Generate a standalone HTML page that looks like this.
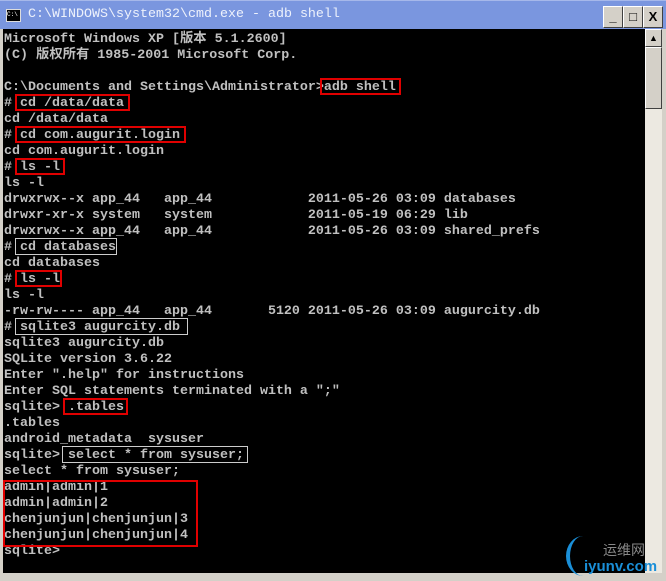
<!DOCTYPE html><html><head><meta charset="utf-8"><style>
body{margin:0;width:666px;height:581px;background:#d4d0c8;position:relative;overflow:hidden;font-family:"Liberation Mono","Noto Sans CJK SC",monospace}
#title{position:absolute;left:0;top:0;width:666px;height:28px;background:#7a96df;border-top:1px solid #a6b8ea}
#title .t{position:absolute;left:28px;top:6px;color:#eef2fc;font-size:13.33px;white-space:pre}
#ico{position:absolute;left:6px;top:8px;width:13px;height:11px;background:#000;border:1px solid #ddd;color:#fff;font-size:6px;line-height:10px}
.btn{position:absolute;top:5px;width:18px;height:20px;background:#d4d0c8;border:1px solid;border-color:#fff #404040 #404040 #fff;font:bold 13px "Liberation Sans",sans-serif;text-align:center;line-height:20px;color:#000}
#con{position:absolute;left:3px;top:29px;width:642px;height:544px;background:#000}
#txt{position:absolute;left:4px;top:32px;color:#c0c0c0;font-size:13.33px;font-weight:bold;line-height:16px;white-space:pre}
#sb{position:absolute;left:645px;top:29px;width:17px;height:544px;background:#ece9e1}
.box{position:absolute;border:2px solid #e00000;box-sizing:border-box}
</style></head><body>
<div id="title"><div id="ico">C:\</div><div class="t">C:\WINDOWS\system32\cmd.exe - adb shell</div>
<div class="btn" style="left:603px">_</div><div class="btn" style="left:623px">□</div><div class="btn" style="left:643px">X</div></div>
<div id="con"></div>
<div id="sb"><div class="btn" style="left:0;top:0;width:15px;height:16px;line-height:16px;font-size:9px">▲</div><div style="position:absolute;left:0;top:18px;width:15px;height:60px;background:#d4d0c8;border:1px solid;border-color:#fff #404040 #404040 #fff"></div></div>
<div id="txt">Microsoft Windows XP [版本 5.1.2600]
(C) 版权所有 1985-2001 Microsoft Corp.

C:\Documents and Settings\Administrator>adb shell
# cd /data/data
cd /data/data
# cd com.augurit.login
cd com.augurit.login
# ls -l
ls -l
drwxrwx--x app_44   app_44            2011-05-26 03:09 databases
drwxr-xr-x system   system            2011-05-19 06:29 lib
drwxrwx--x app_44   app_44            2011-05-26 03:09 shared_prefs
# cd databases
cd databases
# ls -l
ls -l
-rw-rw---- app_44   app_44       5120 2011-05-26 03:09 augurcity.db
# sqlite3 augurcity.db
sqlite3 augurcity.db
SQLite version 3.6.22
Enter ".help" for instructions
Enter SQL statements terminated with a ";"
sqlite> .tables
.tables
android_metadata  sysuser
sqlite> select * from sysuser;
select * from sysuser;
admin|admin|1
admin|admin|2
chenjunjun|chenjunjun|3
chenjunjun|chenjunjun|4
sqlite></div>
<div class="box" style="left:320px;top:78px;width:81px;height:17px"></div>
<div class="box" style="left:15px;top:94px;width:115px;height:17px"></div>
<div class="box" style="left:15px;top:126px;width:171px;height:17px"></div>
<div class="box" style="left:15px;top:158px;width:50px;height:17px"></div>
<div class="box" style="left:15px;top:238px;width:102px;height:17px;border:1px solid #ccc"></div>
<div class="box" style="left:15px;top:270px;width:47px;height:17px"></div>
<div class="box" style="left:15px;top:318px;width:173px;height:17px;border:1px solid #ccc"></div>
<div class="box" style="left:63px;top:398px;width:65px;height:17px"></div>
<div class="box" style="left:62px;top:446px;width:186px;height:17px;border:1px solid #ccc"></div>
<div class="box" style="left:3px;top:480px;width:195px;height:67px"></div>
<div style="position:absolute;left:566px;top:536px;width:30px;height:40px;border-left:4px solid #1a8fd8;border-radius:50%"></div>
<div style="position:absolute;left:603px;top:540px;color:#888;font:14px 'Noto Sans CJK SC',sans-serif">运维网</div>
<div style="position:absolute;left:584px;top:558px;color:#1a8fd8;font:bold 15px 'Liberation Sans',sans-serif">iyunv.com</div>
</body></html>
